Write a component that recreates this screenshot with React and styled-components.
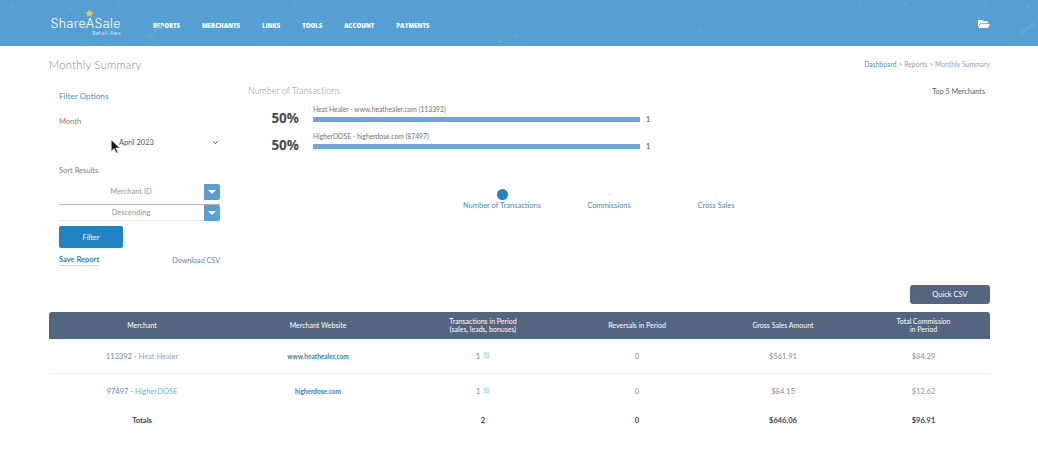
import React from 'react';
import styled, { createGlobalStyle } from 'styled-components';
import { FaFolderOpen } from 'react-icons/fa';

const nav = ['Reports', 'Merchants', 'Links', 'Tools', 'Account', 'Payments'];

const bars = [
    { label: 'Heat Healer - www.heathealer.com (113392)', pct: '50%', count: 1 },
    { label: 'HigherDOSE - higherdose.com (87497)', pct: '50%', count: 1 },
];

const rows = [
    { id: '113392 - ', name: 'Heat Healer', site: 'www.heathealer.com', count: 1, rev: 0, gross: '$561.91', comm: '$84.29' },
    { id: '97497 - ', name: 'HigherDOSE', site: 'higherdose.com', count: 1, rev: 0, gross: '$84.15', comm: '$12.62' },
];

const dots = [[12, 6], [22, 12], [40, 4], [70, 9], [118, 3], [142, 8], [480, 38], [500, 41], [516, 36], [860, 5], [880, 6], [905, 4], [930, 8], [985, 3], [1010, 12], [1028, 7], [650, 20], [700, 30], [760, 12]];

export default function App() {
    return (
        <>
            <GlobalStyle />
            <Header>
                <HeaderArt viewBox="0 0 1038 46" aria-hidden="true">
                    {dots.map(([x, y]) => <circle key={x} cx={x} cy={y} r="1.2" />)}
                    <circle cx="150" cy="36" r="3" />
                    <path d="M153 32l10-6" strokeWidth="4" />
                    <path d="M1020 34l14-10" strokeWidth="4" />
                    <path d="M254 2c-6 10-6 16 0 22l12 9c8 5 18 3 24-6 5-7 6-16 4-27" fill="none" />
                    <ellipse cx="255" cy="22" rx="5" ry="8" fill="none" />
                    <path d="M290 0c2 5 14 5 17 0" fill="none" />
                </HeaderArt>
                <Logo>
                    <Star viewBox="0 0 24 24" aria-hidden="true">
                        <path d="M12 1l3.4 7.2 7.6 1-5.6 5.3 1.5 7.8L12 17.5l-6.9 3.8 1.5-7.8L1 9.2l7.6-1z" />
                    </Star>
                    <LogoName>ShareASale</LogoName>
                    <LogoTag>Retail Aws</LogoTag>
                </Logo>
                <Nav>
                    {nav.map(item => <NavItem key={item}>{item}</NavItem>)}
                </Nav>
                <FolderButton><FaFolderOpen /></FolderButton>
            </Header>

            <Page>
                <TitleRow>
                    <PageTitle>Monthly Summary</PageTitle>
                    <Crumbs><CrumbLink>Dashboard</CrumbLink> &gt; Reports &gt; Monthly Summary</Crumbs>
                </TitleRow>

                <Summary>
                    <Filters>
                        <FilterTitle>Filter Options</FilterTitle>
                        <FieldLabel>Month</FieldLabel>
                        <MonthSelect>
                            <span>April 2023</span>
                            <Chevron viewBox="0 0 10 10" aria-hidden="true"><path d="M2 3.5l3 3 3-3" /></Chevron>
                        </MonthSelect>
                        <FieldLabel $sort>Sort Results</FieldLabel>
                        <SortSelect>
                            <span>Merchant ID</span>
                            <Caret />
                        </SortSelect>
                        <SortSelect $last>
                            <span>Descending</span>
                            <Caret $last />
                        </SortSelect>
                        <FilterButton>Filter</FilterButton>
                        <FilterLinks>
                            <SaveLink>Save Report</SaveLink>
                            <DownloadLink>Download CSV</DownloadLink>
                        </FilterLinks>
                    </Filters>

                    <Chart>
                        <ChartHead>
                            <ChartTitle>Number of Transactions</ChartTitle>
                            <TopLabel>Top 5 Merchants</TopLabel>
                        </ChartHead>
                        {bars.map(bar => (
                            <BarRow key={bar.label}>
                                <Pct>{bar.pct}</Pct>
                                <BarBody>
                                    <BarLabel>{bar.label}</BarLabel>
                                    <Bar />
                                </BarBody>
                                <BarCount>{bar.count}</BarCount>
                            </BarRow>
                        ))}
                        <Tabs>
                            <Tab $active>Number of Transactions</Tab>
                            <Tab>Commissions</Tab>
                            <Tab>Cross Sales</Tab>
                        </Tabs>
                    </Chart>
                </Summary>

                <Actions>
                    <QuickButton>Quick CSV</QuickButton>
                </Actions>

                <Table>
                    <colgroup>
                        <col width="186" />
                        <col width="166" />
                        <col width="164" />
                        <col width="144" />
                        <col width="148" />
                        <col width="133" />
                    </colgroup>
                    <thead>
                        <tr>
                            <Th>Merchant</Th>
                            <Th>Merchant Website</Th>
                            <Th>Transactions in Period<br /><small>(sales, leads, bonuses)</small></Th>
                            <Th>Reversals in Period</Th>
                            <Th>Gross Sales Amount</Th>
                            <Th>Total Commission<br />in Period</Th>
                        </tr>
                    </thead>
                    <tbody>
                        {rows.map(row => (
                            <Tr key={row.id}>
                                <Td><Muted>{row.id}</Muted><TdLink>{row.name}</TdLink></Td>
                                <Td><SiteLink>{row.site}</SiteLink></Td>
                                <Td>
                                    <Muted>{row.count}</Muted>
                                    <CountIcon viewBox="0 0 10 10" aria-hidden="true"><path d="M9 1.5H2v3h6.5v3H1" /></CountIcon>
                                </Td>
                                <Td>{row.rev}</Td>
                                <Td>{row.gross}</Td>
                                <Td>{row.comm}</Td>
                            </Tr>
                        ))}
                        <TotalRow>
                            <td>Totals</td>
                            <td />
                            <td>2</td>
                            <td>0</td>
                            <td>$646.06</td>
                            <td>$96.91</td>
                        </TotalRow>
                    </tbody>
                </Table>
            </Page>

            <Cursor viewBox="0 0 12 16" aria-hidden="true">
                <path d="M1 1v12l3-3 2.5 5 1.5-.8L5.8 9.5H10z" />
            </Cursor>
        </>
    );
}

const GlobalStyle = createGlobalStyle`
    html, body {
        margin: 0;
        height: 100%;
        background: #fff;
        overflow: hidden;
        font-family: "Lato", "Open Sans", sans-serif;
    }
    * { box-sizing: border-box; }
`;

const Header = styled.header`
    position: relative;
    display: flex;
    align-items: center;
    height: 46px;
    padding: 0 48px 0 51px;
    background: #559fd3;
    overflow: hidden;
`;

const HeaderArt = styled.svg`
    position: absolute;
    inset: 0;
    width: 1038px;
    height: 46px;
    fill: #6aaada;
    stroke: #68a9d9;
    stroke-width: 1;
    opacity: .6;
    pointer-events: none;
`;

const Logo = styled.div`
    position: relative;
    display: flex;
    flex-direction: column;
    align-items: flex-end;
    width: 70px;
    margin-top: 6px;
    color: #fff;
`;

const Star = styled.svg`
    position: absolute;
    top: -8px;
    left: 34px;
    width: 9px;
    height: 9px;
    fill: #f6c642;
`;

const LogoName = styled.div`
    font-family: "Inter", sans-serif;
    font-size: 12.5px;
    font-weight: 300;
    line-height: 13px;
    letter-spacing: .4px;
    white-space: nowrap;
`;

const LogoTag = styled.div`
    font-size: 5px;
    line-height: 6px;
    letter-spacing: .6px;
    opacity: .8;
    white-space: nowrap;
`;

const Nav = styled.nav`
    display: flex;
    gap: 22px;
    margin: 6px 0 0 32px;
`;

const NavItem = styled.a`
    color: #fff;
    font-family: "Open Sans", sans-serif;
    font-size: 6px;
    font-weight: 800;
    text-transform: uppercase;
    white-space: nowrap;
`;

const FolderButton = styled.div`
    display: flex;
    margin: 2px 0 0 auto;
    color: #fff;
    font-size: 12px;
`;

const Page = styled.main`
    padding: 0 48px 0 49px;
`;

const TitleRow = styled.div`
    display: flex;
    justify-content: space-between;
    align-items: center;
    height: 36px;
`;

const PageTitle = styled.h1`
    margin: 0;
    color: #8b8079;
    font-size: 11.2px;
    font-weight: 300;
    letter-spacing: .3px;
`;

const Crumbs = styled.div`
    color: #9a9aa6;
    font-size: 6.65px;
    letter-spacing: .1px;
`;

const CrumbLink = styled.a`
    color: #4f8dbd;
`;

const Summary = styled.section`
    display: flex;
    height: 203px;
`;

const Filters = styled.aside`
    display: flex;
    flex-direction: column;
    width: 171px;
    margin-right: 28px;
    padding: 8px 0 0 10px;
`;

const FilterTitle = styled.div`
    color: #4f8dbd;
    font-size: 8.2px;
    line-height: 12px;
`;

const FieldLabel = styled.div`
    margin-top: ${props => props.$sort ? '13px' : '15px'};
    color: #85807c;
    font-size: 7.5px;
    line-height: 10px;
`;

const MonthSelect = styled.div`
    display: flex;
    justify-content: space-between;
    align-items: center;
    height: 22px;
    margin-top: 4px;
    padding: 0 1px 0 60px;
    color: #555;
    font-size: 7.5px;
`;

const Chevron = styled.svg`
    width: 7px;
    height: 7px;
    fill: none;
    stroke: #333;
    stroke-width: 1.3;
`;

const SortSelect = styled.div`
    position: relative;
    display: flex;
    justify-content: center;
    align-items: center;
    height: ${props => props.$last ? '16px' : '24px'};
    margin-top: ${props => props.$last ? '0' : '5px'};
    padding-right: 17px;
    border-bottom: 1px solid ${props => props.$last ? '#e6e6e6' : '#b5b5b5'};
    color: #9b9390;
    font-size: 7.5px;

    & > span {
        transform: translateY(${props => props.$last ? '0' : '-1px'});
    }
`;

const Caret = styled.div`
    position: absolute;
    top: ${props => props.$last ? '0' : '3px'};
    right: 0;
    width: 16px;
    height: 16px;
    border-radius: 0 2px 2px 0;
    background: #5a9fd4;

    &::after {
        content: '';
        position: absolute;
        top: 6px;
        left: 4px;
        border-left: 4px solid transparent;
        border-right: 4px solid transparent;
        border-top: 4px solid #fff;
    }
`;

const FilterButton = styled.button`
    width: 64px;
    height: 22px;
    margin-top: 5px;
    padding: 0;
    border: 0;
    border-radius: 2px;
    background: #1f83c4;
    color: #fff;
    font-family: inherit;
    font-size: 7.5px;
`;

const FilterLinks = styled.div`
    display: flex;
    justify-content: space-between;
    align-items: center;
    margin-top: 7px;
`;

const SaveLink = styled.a`
    border-bottom: 1px solid #bfe3f5;
    color: #2f7fb5;
    font-size: 7.5px;
    font-weight: 700;
    line-height: 10px;
`;

const DownloadLink = styled.a`
    color: #6a83a8;
    font-size: 7.2px;
    line-height: 10px;
`;

const Chart = styled.div`
    flex: 1;
    display: flex;
    flex-direction: column;
`;

const ChartHead = styled.div`
    display: flex;
    justify-content: space-between;
    align-items: center;
    height: 16px;
    padding: 1px 5px 0 0;
`;

const ChartTitle = styled.div`
    color: #8b8886;
    font-size: 8.8px;
    font-weight: 300;
    letter-spacing: .1px;
`;

const TopLabel = styled.div`
    padding-top: 2px;
    color: #5e5e68;
    font-size: 7.2px;
`;

const BarRow = styled.div`
    display: flex;
    align-items: flex-end;
    height: 27px;
`;

const Pct = styled.div`
    width: 65px;
    margin-bottom: -2px;
    padding-right: 14px;
    color: #4a4a4a;
    font-family: "Open Sans", sans-serif;
    font-size: 13.5px;
    font-weight: 700;
    line-height: 18px;
    text-align: right;
`;

const BarBody = styled.div`
    width: 327px;
    padding-bottom: 3px;
`;

const BarLabel = styled.div`
    margin-bottom: 3px;
    color: #77706c;
    font-size: 6.75px;
    line-height: 9px;
    white-space: nowrap;
`;

const Bar = styled.div`
    height: 5px;
    background: #69a7de;
`;

const BarCount = styled.div`
    margin-left: 6px;
    color: #444;
    font-size: 7px;
    line-height: 11px;
`;

const Tabs = styled.div`
    display: flex;
    justify-content: center;
    margin-top: 37px;
    transform: translateX(-10px);
`;

const Tab = styled.div`
    position: relative;
    width: 107px;
    padding-top: 12px;
    color: #5585a8;
    font-size: 7.5px;
    line-height: 10px;
    text-align: center;
    white-space: nowrap;

    &::before {
        content: '';
        position: absolute;
        top: ${props => props.$active ? '0' : '4px'};
        left: 50%;
        width: ${props => props.$active ? '11px' : '3px'};
        height: ${props => props.$active ? '11px' : '3px'};
        margin-left: ${props => props.$active ? '-5.5px' : '-1.5px'};
        border-radius: 50%;
        background: ${props => props.$active ? '#1f83c4' : '#f3f5f8'};
    }
`;

const Actions = styled.div`
    display: flex;
    justify-content: flex-end;
`;

const QuickButton = styled.button`
    width: 80px;
    height: 19px;
    padding: 0;
    border: 0;
    border-radius: 3px;
    background: #54667f;
    color: #fff;
    font-family: inherit;
    font-size: 7.5px;
`;

const Table = styled.table`
    width: 941px;
    margin-top: 8px;
    border-collapse: collapse;
    table-layout: fixed;
    font-size: 7.5px;
    text-align: center;
`;

const Th = styled.th`
    height: 27px;
    padding: 0;
    background: #54667f;
    color: #fff;
    font-size: 7px;
    font-weight: 400;
    line-height: 7.5px;

    &:first-child { border-top-left-radius: 3px; }
    &:last-child { border-top-right-radius: 3px; }

    small { font-size: 7px; }
`;

const Tr = styled.tr`
    height: 34px;
    border-bottom: 1px solid #f2f2f2;

    &:nth-child(2) {
        height: 36px;
        border-bottom: 0;
    }
`;

const Td = styled.td`
    padding: 1px 0 0;
    color: #8d8d8d;
`;

const Muted = styled.span`
    color: #5f89a6;
`;

const TdLink = styled.a`
    color: #6fb0e0;
`;

const SiteLink = styled.a`
    color: #2f7fb5;
    font-size: 6.5px;
    font-weight: 700;
`;

const CountIcon = styled.svg`
    width: 7px;
    height: 7px;
    margin-left: 3px;
    fill: none;
    stroke: #8fcdf0;
    stroke-width: 1.2;
`;

const TotalRow = styled.tr`
    height: 22px;
    color: #444;
    font-size: 7.5px;
    font-weight: 700;

    td { padding: 0; }
`;

const Cursor = styled.svg`
    position: absolute;
    top: 139px;
    left: 110px;
    width: 12px;
    height: 15px;
    fill: #1b1b1b;
    stroke: #fff;
    stroke-width: .4;
`;
